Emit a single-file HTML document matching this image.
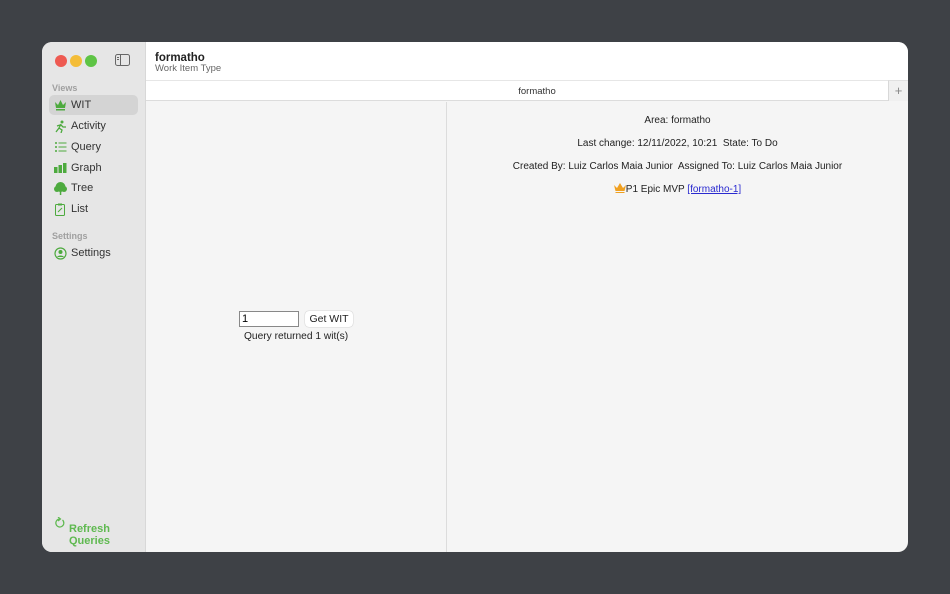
<!DOCTYPE html>
<html><head><meta charset="utf-8"><style>
*{margin:0;padding:0;box-sizing:border-box}
body{width:950px;height:594px;background:#3e4146;font-family:"Liberation Sans",sans-serif;position:relative;overflow:hidden}
.win{position:absolute;left:42px;top:42px;width:866px;height:510px;border-radius:10px;overflow:hidden;background:#f5f5f5}
.side{position:absolute;left:0;top:0;width:104px;height:510px;background:#e6e6e6;border-right:1px solid #d8d8d8}
.dot{position:absolute;top:13px;width:12px;height:12px;border-radius:50%}
.sec{position:absolute;left:10px;font-size:9px;color:#a0a0a0;font-weight:bold}
.item{position:absolute;left:7px;width:89px;height:20px;font-size:11px;color:#333;line-height:20px;padding-left:22px;border-radius:5px}
.item svg{position:absolute;left:5px;top:4px}
.top{position:absolute;left:104px;top:0;right:0;height:59px;background:#fff;border-bottom:1px solid #dcdcdc}
.t{position:absolute;font-size:11px;color:#222}
</style></head><body>
<div class="win">
<div class="side">
<div class="dot" style="left:13px;background:#ee5a52"></div>
<div class="dot" style="left:28px;background:#f4bd38"></div>
<div class="dot" style="left:43px;background:#5ec445"></div>
<svg style="position:absolute;left:73px;top:12px" width="15" height="12"><rect x="0.5" y="0.5" width="14" height="11" rx="2" fill="none" stroke="#666"/><line x1="5.5" y1="1" x2="5.5" y2="11" stroke="#666"/><line x1="2" y1="3.5" x2="4" y2="3.5" stroke="#666"/><line x1="2" y1="5.5" x2="4" y2="5.5" stroke="#666"/></svg>
<div class="sec" style="top:41px">Views</div>
<div class="item" style="top:53px;background:#d4d4d4"><svg width="13" height="12"><path d="M1 3l3 3 2.5-5 2.5 5 3-3-1 6H2z M2 10h9v1.5H2z" fill="#4daa3e"/></svg>WIT</div>
<div class="item" style="top:74px"><svg width="13" height="13"><circle cx="8" cy="2" r="1.5" fill="#4daa3e"/><path d="M7 4L5 8l3 2-1 3M5 8l-3 4M6 5l-3 1M7 5l2 2 3 0" stroke="#4daa3e" stroke-width="1.3" fill="none"/></svg>Activity</div>
<div class="item" style="top:95px"><svg width="13" height="12"><g fill="#4daa3e"><circle cx="2" cy="2" r="1"/><circle cx="2" cy="6" r="1"/><circle cx="2" cy="10" r="1"/><rect x="4.5" y="1.5" width="8" height="1"/><rect x="4.5" y="5.5" width="8" height="1"/><rect x="4.5" y="9.5" width="8" height="1"/></g></svg>Query</div>
<div class="item" style="top:116px"><svg width="13" height="12"><g fill="#4daa3e"><rect x="0" y="5" width="3.5" height="6"/><rect x="4.5" y="3" width="3.5" height="8"/><rect x="9" y="1" width="3.5" height="10"/></g></svg>Graph</div>
<div class="item" style="top:136px"><svg width="13" height="13"><circle cx="6.5" cy="5" r="5" fill="#4daa3e"/><circle cx="3" cy="7" r="3" fill="#4daa3e"/><circle cx="10" cy="7" r="3" fill="#4daa3e"/><rect x="5.8" y="8" width="1.5" height="5" fill="#4daa3e"/></svg>Tree</div>
<div class="item" style="top:157px"><svg width="13" height="13"><rect x="1.5" y="1.5" width="9" height="11" rx="1" fill="none" stroke="#4daa3e"/><rect x="4" y="0.5" width="4" height="2" fill="#4daa3e"/><path d="M4 9l4-4" stroke="#4daa3e"/></svg>List</div>
<div class="sec" style="top:189px">Settings</div>
<div class="item" style="top:201px"><svg width="13" height="13"><circle cx="6.5" cy="6.5" r="5.5" fill="none" stroke="#4daa3e" stroke-width="1.2"/><circle cx="6.5" cy="5" r="2" fill="#4daa3e"/><path d="M3 10c1-2 6-2 7 0" fill="#4daa3e"/></svg>Settings</div>
<svg style="position:absolute;left:12px;top:475px" width="11" height="12"><path d="M8.5 3A4 4 0 1 1 5.5 2" fill="none" stroke="#5fb950" stroke-width="1.2"/><path d="M4 0l2.5 2L4 4" fill="none" stroke="#5fb950" stroke-width="1.2"/></svg>
<div style="position:absolute;left:27px;top:481px;font-size:11px;color:#5fb950;font-weight:bold;line-height:12px;text-align:center">Refresh<br>Queries</div>
</div>
<div class="top">
<div class="t" style="left:9px;top:10px;font-weight:bold;font-size:11.5px">formatho</div>
<div class="t" style="left:9px;top:21px;font-size:9.5px;color:#666">Work Item Type</div>
<div style="position:absolute;left:0;right:0;top:38px;height:21px;border-top:1px solid #e6e6e6;font-size:9.5px;color:#333;text-align:center;line-height:22px;padding-left:20px">formatho</div>
<div style="position:absolute;right:0;top:38px;width:20px;height:21px;background:#f0f0f0;border-left:1px solid #d8d8d8;border-top:1px solid #e0e0e0;text-align:center;color:#888;font-size:13px;line-height:19px">+</div>
</div>
<div style="position:absolute;left:404px;top:60px;width:1px;height:450px;background:#dcdcdc"></div>
<input value="1" style="position:absolute;left:197px;top:269px;width:60px;height:16px;border:1px solid #888;font-size:11px;padding-left:2px;font-family:'Liberation Sans'">
<div style="position:absolute;left:263px;top:269px;width:48px;height:16px;background:#fff;border-radius:4px;box-shadow:0 0 1px #999;font-size:10.5px;text-align:center;line-height:16px;color:#222">Get WIT</div>
<div class="t" style="left:202px;top:289px;font-size:10.2px">Query returned 1 wit(s)</div>
<div style="position:absolute;left:405px;right:0;top:67px;font-size:10px;color:#222;text-align:center;line-height:23px">
<div>Area: formatho</div>
<div>Last change: 12/11/2022, 10:21&nbsp; State: To Do</div>
<div>Created By: Luiz Carlos Maia Junior&nbsp; Assigned To: Luiz Carlos Maia Junior</div>
<div><svg width="12" height="10" style="vertical-align:-1px"><path d="M0 2l3 3 3-5 3 5 3-3-1.5 6h-9z M1.5 9h9v1h-9z" fill="#f0a020"/></svg>P1 Epic MVP <span style="color:#2a2ad0;text-decoration:underline">[formatho-1]</span></div>
</div>
</div>
</body></html>
